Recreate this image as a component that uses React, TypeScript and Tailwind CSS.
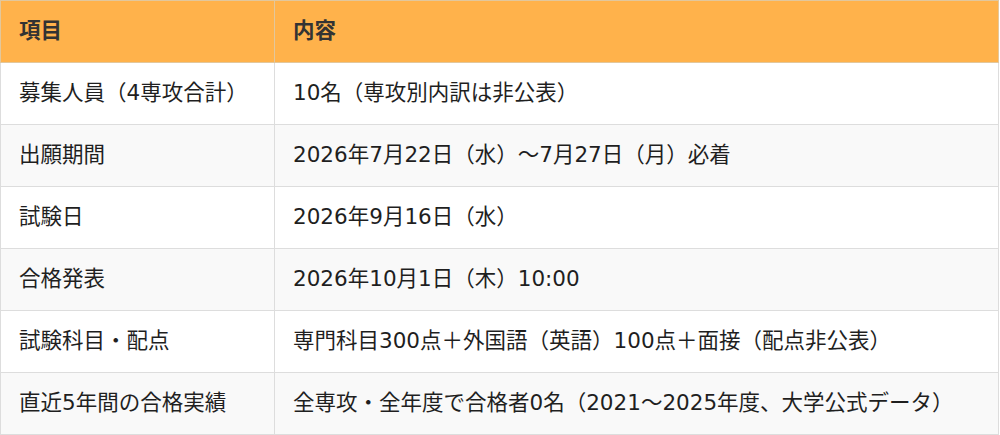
import React from "react";

const rows: [string, string][] = [
  ["募集人員（4専攻合計）", "10名（専攻別内訳は非公表）"],
  ["出願期間", "2026年7月22日（水）～7月27日（月）必着"],
  ["試験日", "2026年9月16日（水）"],
  ["合格発表", "2026年10月1日（木）10:00"],
  ["試験科目・配点", "専門科目300点＋外国語（英語）100点＋面接（配点非公表）"],
  ["直近5年間の合格実績", "全専攻・全年度で合格者0名（2021～2025年度、大学公式データ）"],
];

export default function App() {
  return (
    <div
      className="w-[1000px] h-[435px] bg-white overflow-hidden"
      style={{ fontFamily: '"DejaVu Sans", "Noto Sans CJK JP", sans-serif' }}
    >
      <table className="w-[999px] border-collapse text-[21.5px] text-[#1f1f1f]">
        <thead>
          <tr className="h-[62px] bg-[#ffb24b]">
            <th className="w-[274px] border border-[#e2c79c] px-[18px] text-left font-bold text-[#333]">項目</th>
            <th className="border border-[#e2c79c] px-[18px] text-left font-bold text-[#333]">内容</th>
          </tr>
        </thead>
        <tbody>
          {rows.map(([a, b], i) => (
            <tr key={i} className={`h-[62px] ${i % 2 === 1 ? "bg-[#f9f9f9]" : "bg-white"}`}>
              <td className="border border-[#dddddd] px-[18px]">{a}</td>
              <td className="border border-[#dddddd] px-[18px]">{b}</td>
            </tr>
          ))}
        </tbody>
      </table>
    </div>
  );
}
